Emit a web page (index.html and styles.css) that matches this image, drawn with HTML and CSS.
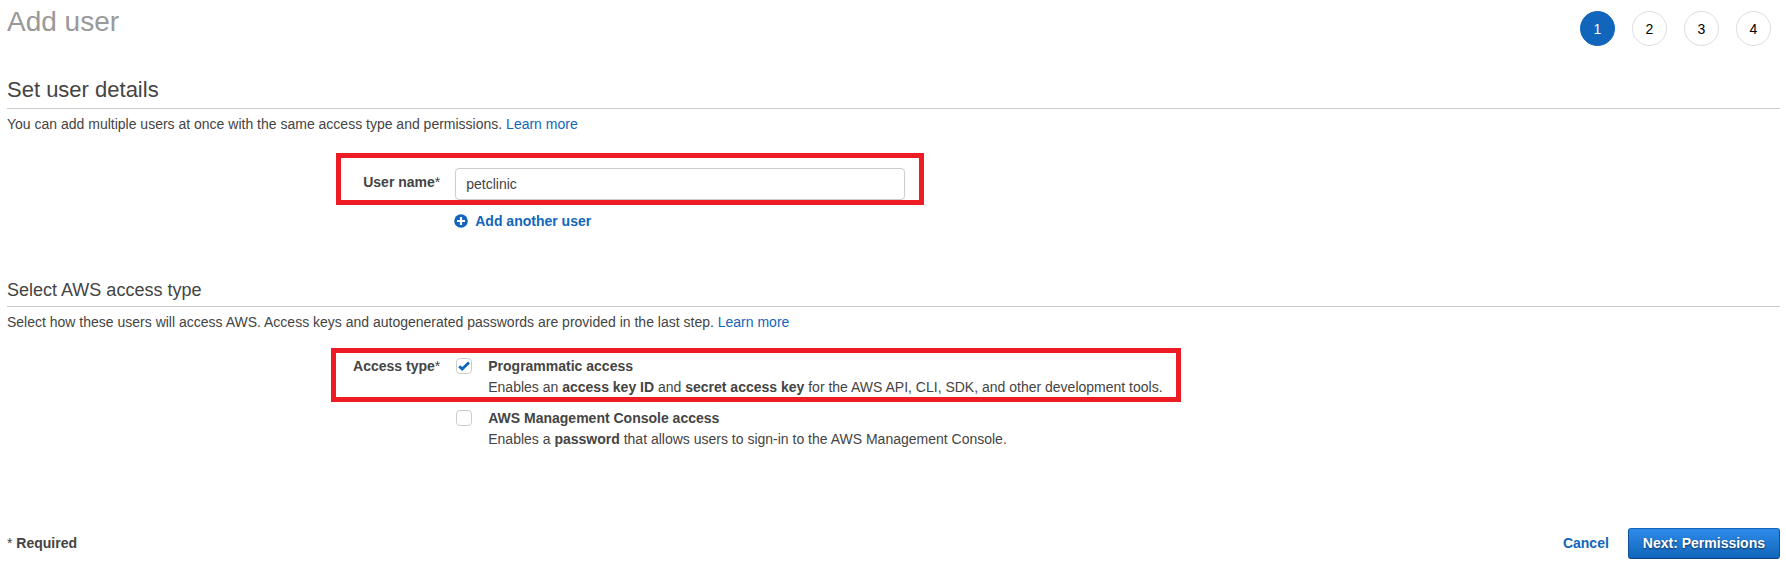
FILE: index.html
```html
<!DOCTYPE html>
<html lang="en">
<head>
<meta charset="utf-8">
<title>Add user</title>
<link rel="stylesheet" href="styles.css">
</head>
<body>
<form class="page">
  <header class="header">
    <h1 class="title">Add user</h1>
    <ol class="steps">
      <li class="step step-active">1</li>
      <li class="step">2</li>
      <li class="step">3</li>
      <li class="step">4</li>
    </ol>
  </header>

  <section class="section">
    <h2 class="heading heading-large">Set user details</h2>
    <p class="intro">You can add multiple users at once with the same access type and permissions. <a class="link" href="#">Learn more</a></p>
    <div class="row row-name">
      <label class="label label-name" for="username">User name<span class="star">*</span></label>
      <input class="input" id="username" type="text" value="petclinic">
      <div class="highlight highlight-name"></div>
    </div>
    <div class="row">
      <button class="add" type="button">
        <svg class="add-icon" viewBox="0 0 14 14" aria-hidden="true"><circle cx="7" cy="7" r="6.8" fill="#1166bb"/><path d="M7 3v8M3 7h8" stroke="#fff" stroke-width="2.2"/></svg>
        <span>Add another user</span>
      </button>
    </div>
  </section>

  <section class="section section-access">
    <h2 class="heading">Select AWS access type</h2>
    <p class="intro">Select how these users will access AWS. Access keys and autogenerated passwords are provided in the last step. <a class="link" href="#">Learn more</a></p>
    <div class="row row-access">
      <div class="label" id="access-label">Access type<span class="star">*</span></div>
      <div class="options" role="group" aria-labelledby="access-label">
        <div class="option">
          <span class="check">
            <input class="check-input" id="programmatic" type="checkbox" checked>
            <svg class="check-mark" viewBox="0 0 16 16" aria-hidden="true"><path d="M3.2 8.2l3 2.8 6.8-6.4" fill="none" stroke="#1166bb" stroke-width="2.8"/></svg>
          </span>
          <label for="programmatic"><b>Programmatic access</b><br>Enables an <b>access key ID</b> and <b>secret access key</b> for the AWS API, CLI, SDK, and other development tools.</label>
        </div>
        <div class="option">
          <span class="check">
            <input class="check-input" id="console" type="checkbox">
            <svg class="check-mark" viewBox="0 0 16 16" aria-hidden="true"><path d="M3.2 8.2l3 2.8 6.8-6.4" fill="none" stroke="#1166bb" stroke-width="2.8"/></svg>
          </span>
          <label for="console"><b>AWS Management Console access</b><br>Enables a <b>password</b> that allows users to sign-in to the AWS Management Console.</label>
        </div>
      </div>
      <div class="highlight highlight-access"></div>
    </div>
  </section>

  <footer class="footer">
    <div class="required"><span class="star">*</span> Required</div>
    <a class="cancel" href="#">Cancel</a>
    <button class="next" type="button">Next: Permissions</button>
  </footer>
</form>
</body>
</html>
```

FILE: styles.css
```css
* { box-sizing: border-box; }
body {
  margin: 0;
  background: #fff;
  color: #444;
  font: 14px/20px "Liberation Sans", Arial, sans-serif;
}
h1, h2, p, ol { margin: 0; padding: 0; }
.page { padding: 6px 6px 15px 7px; }

.header { display: flex; justify-content: space-between; align-items: flex-start; }
.title { font-size: 28px; line-height: 32px; font-weight: 400; color: #999; }
.steps { display: flex; gap: 17px; list-style: none; padding: 5px 9px 0 0; }
.step {
  width: 35px;
  height: 35px;
  border: 1px solid #ddd;
  border-radius: 50%;
  line-height: 34px;
  text-align: center;
  color: #000;
}
.step-active { background: #1166bb; border-color: #1166bb; color: #fff; }

.section { margin-top: 31px; }
.section-access { margin-top: 48px; }
.heading {
  padding-bottom: 5px;
  border-bottom: 1px solid #ccc;
  font-size: 18px;
  line-height: 22px;
  font-weight: 400;
}
.heading-large { font-size: 22px; line-height: 26px; }
.intro { margin-top: 5px; }
.link { color: #1166bb; text-decoration: none; }

.row { position: relative; display: grid; grid-template-columns: 25% 1fr; column-gap: 5px; }
.row-name { margin: 34px 0 11px; }
.row-access { margin-top: 24px; line-height: 21px; }
.label { padding-right: 10px; text-align: right; font-weight: 700; }
.label-name { padding-top: 4px; }
.star { font-weight: 400; }
.input {
  width: 100%;
  max-width: 450px;
  height: 32px;
  padding: 0 10px;
  border: 1px solid #ccc;
  border-radius: 4px;
  background: #fff;
  color: #444;
  font: inherit;
}
.highlight { position: absolute; border: 5px solid #ed1c24; pointer-events: none; }
.highlight-name { top: -15px; left: calc(25% - 114px); width: 588px; height: 52px; }
.highlight-access { top: -8px; left: calc(25% - 119px); width: 850px; height: 54px; }

.add {
  grid-column: 2;
  justify-self: start;
  display: flex;
  gap: 7px;
  align-items: center;
  margin-left: -1px;
  padding: 0;
  border: 0;
  background: none;
  color: #1166bb;
  font: inherit;
  font-weight: 700;
}
.add-icon { width: 14px; height: 14px; }

.options { display: grid; gap: 10px; }
.option { display: flex; gap: 16px; }
.check { position: relative; width: 16px; height: 16px; margin: 2px 0 0 1px; flex: none; }
.check-input {
  appearance: none;
  display: block;
  width: 16px;
  height: 16px;
  margin: 0;
  border: 1px solid #ccc;
  border-radius: 4px;
  background: #fff;
}
.check-mark { position: absolute; inset: 0; visibility: hidden; pointer-events: none; }
.check-input:checked + .check-mark { visibility: visible; }

.footer { display: flex; align-items: baseline; margin-top: 78px; font-weight: 700; }
.required { flex: 1; }
.cancel { margin-right: 19px; color: #1166bb; text-decoration: none; }
.next {
  padding: 4px 14px 5px;
  border: 1px solid #0d5299;
  border-top-color: #1166bb;
  border-bottom-color: #0b4480;
  border-radius: 3px;
  background: linear-gradient(#2e8bea, #1166bb);
  color: #fff;
  font: inherit;
  text-shadow: 0 1px 2px rgba(0, 0, 0, 0.6);
}
```
